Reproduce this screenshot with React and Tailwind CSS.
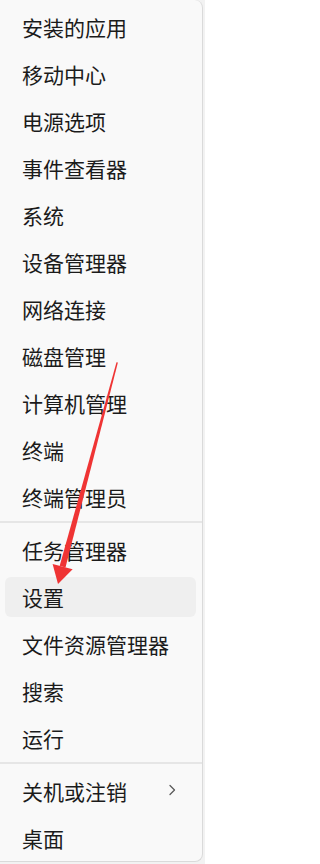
import React from "react";

const section1 = ["安装的应用","移动中心","电源选项","事件查看器","系统","设备管理器","网络连接","磁盘管理","计算机管理","终端","终端管理员"];
const section2 = ["任务管理器","设置","文件资源管理器","搜索","运行"];

function Item({ label, active, chevron }) {
  return (
    <div className={"h-[40px] ml-[5px] mr-[6px] rounded-[6px] flex items-center pl-[17px] pr-[18px] " + (active ? "bg-[#efefef]" : "")}>
      <span className="flex-1 text-[21px] leading-none text-[#1b1b1b] whitespace-nowrap">{label}</span>
      {chevron && (
        <svg width="10" height="12" viewBox="0 0 10 12" className="mr-[1px] -mt-[2px]">
          <path d="M3 1.5 L7.5 6 L3 10.5" fill="none" stroke="#5a5a5a" strokeWidth="1.3" strokeLinecap="round" strokeLinejoin="round" />
        </svg>
      )}
    </div>
  );
}

function Divider() {
  return <div className="h-[2px] bg-[#e6e6e6] mt-[4px] mb-[7px]" />;
}

export default function App() {
  return (
    <div className="relative w-[205px] h-[864px] bg-[#f2f2f2] overflow-hidden" style={{ fontFamily: '"Noto Sans CJK SC", "Noto Sans", sans-serif' }}>
      <div className="w-[203px] h-[862px] bg-[#f9f9f9] border-r border-b border-[#dadada] rounded-tr-[8px] rounded-br-[8px] pt-[7px] flex flex-col">
        <div className="flex flex-col gap-[7px]">
          {section1.map((l) => <Item key={l} label={l} />)}
        </div>
        <Divider />
        <div className="flex flex-col gap-[7px]">
          {section2.map((l) => <Item key={l} label={l} active={l === "设置"} />)}
        </div>
        <Divider />
        <div className="flex flex-col gap-[7px]">
          <Item label="关机或注销" chevron />
          <Item label="桌面" />
        </div>
      </div>
      <svg className="absolute inset-0 pointer-events-none" width="205" height="864" viewBox="0 0 205 864">
        <polygon points="117.9,362.6 116.5,362.2 59.7,565.8 65.5,567.4" fill="#ef3434" />
        <polygon points="52.6,563.9 72.6,569.3 58,584" fill="#ef3434" />
      </svg>
    </div>
  );
}
